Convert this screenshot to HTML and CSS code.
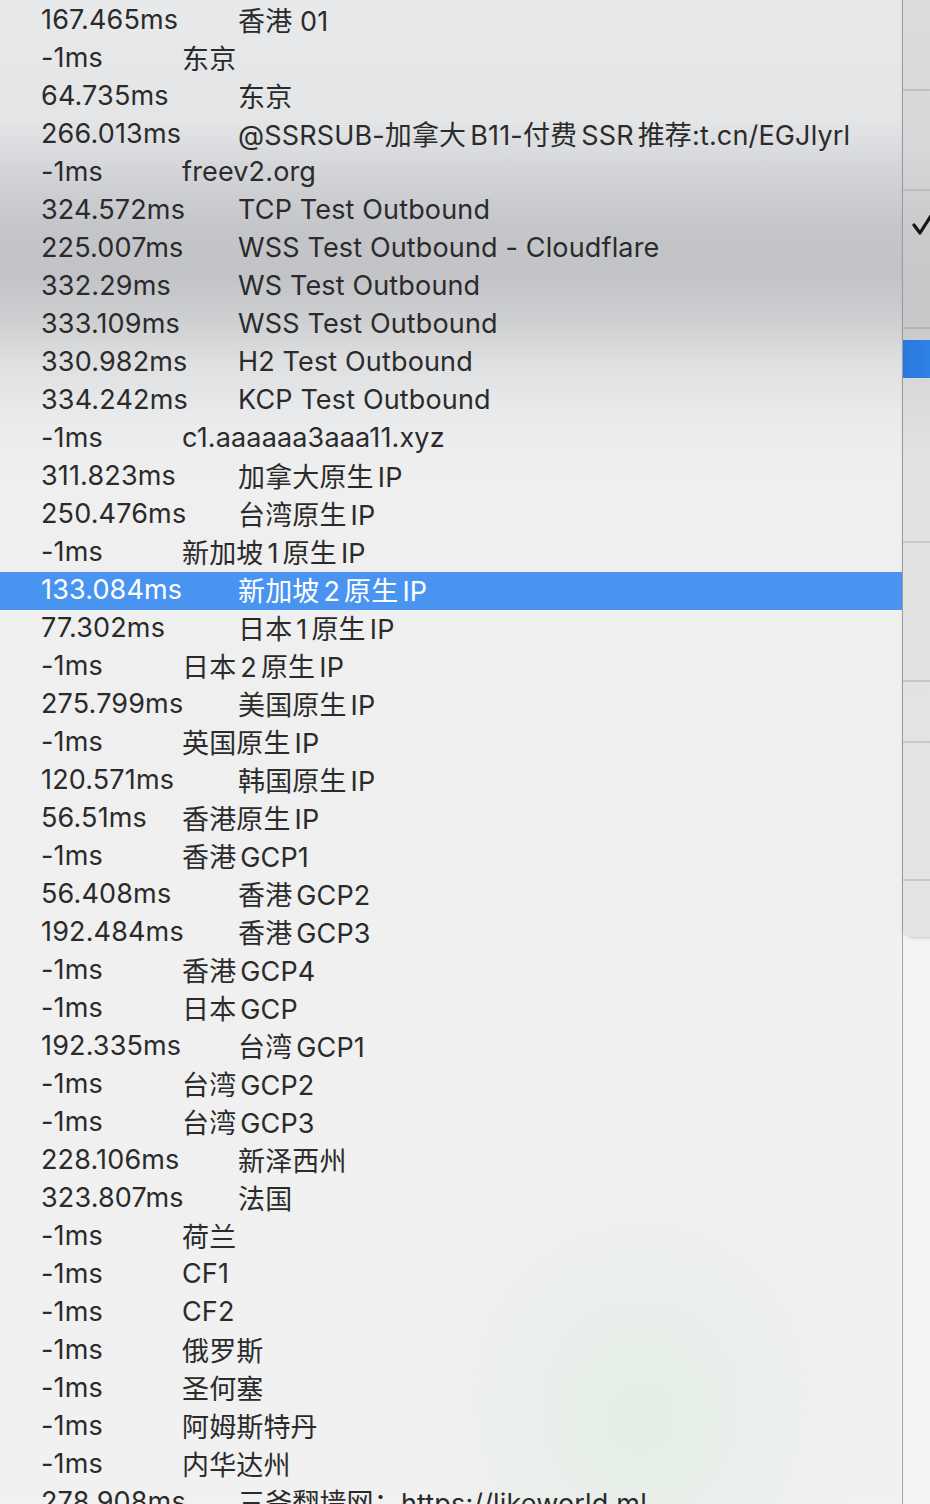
FILE: index.html
```html
<!DOCTYPE html>
<html lang="zh-CN">
<head>
<meta charset="utf-8">
<title>Latency menu</title>
<link rel="stylesheet" href="styles.css">
</head>
<body>
<div class="menu">
  <div class="row l"><span class="lat">167.465ms</span><span class="name">香港 01</span></div>
  <div class="row"><span class="lat">-1ms</span><span class="name">东京</span></div>
  <div class="row l"><span class="lat">64.735ms</span><span class="name">东京</span></div>
  <div class="row l"><span class="lat">266.013ms</span><span class="name">@SSRSUB-加拿大<span class="al">B11-</span>付费<span class="a">SSR</span>推荐:t.cn/EGJlyrl</span></div>
  <div class="row"><span class="lat">-1ms</span><span class="name">freev2.org</span></div>
  <div class="row l"><span class="lat">324.572ms</span><span class="name">TCP Test Outbound</span></div>
  <div class="row l"><span class="lat">225.007ms</span><span class="name">WSS Test Outbound - Cloudflare</span></div>
  <div class="row l"><span class="lat">332.29ms</span><span class="name">WS Test Outbound</span></div>
  <div class="row l"><span class="lat">333.109ms</span><span class="name">WSS Test Outbound</span></div>
  <div class="row l"><span class="lat">330.982ms</span><span class="name">H2 Test Outbound</span></div>
  <div class="row l"><span class="lat">334.242ms</span><span class="name">KCP Test Outbound</span></div>
  <div class="row"><span class="lat">-1ms</span><span class="name">c1.aaaaaa3aaa11.xyz</span></div>
  <div class="row l"><span class="lat">311.823ms</span><span class="name">加拿大原生<span class="a">IP</span></span></div>
  <div class="row l"><span class="lat">250.476ms</span><span class="name">台湾原生<span class="a">IP</span></span></div>
  <div class="row"><span class="lat">-1ms</span><span class="name">新加坡<span class="a">1</span>原生<span class="a">IP</span></span></div>
  <div class="row l sel"><span class="lat">133.084ms</span><span class="name">新加坡<span class="a">2</span>原生<span class="a">IP</span></span></div>
  <div class="row l"><span class="lat">77.302ms</span><span class="name">日本<span class="a">1</span>原生<span class="a">IP</span></span></div>
  <div class="row"><span class="lat">-1ms</span><span class="name">日本<span class="a">2</span>原生<span class="a">IP</span></span></div>
  <div class="row l"><span class="lat">275.799ms</span><span class="name">美国原生<span class="a">IP</span></span></div>
  <div class="row"><span class="lat">-1ms</span><span class="name">英国原生<span class="a">IP</span></span></div>
  <div class="row l"><span class="lat">120.571ms</span><span class="name">韩国原生<span class="a">IP</span></span></div>
  <div class="row"><span class="lat">56.51ms</span><span class="name">香港原生<span class="a">IP</span></span></div>
  <div class="row"><span class="lat">-1ms</span><span class="name">香港<span class="a">GCP1</span></span></div>
  <div class="row l"><span class="lat">56.408ms</span><span class="name">香港<span class="a">GCP2</span></span></div>
  <div class="row l"><span class="lat">192.484ms</span><span class="name">香港<span class="a">GCP3</span></span></div>
  <div class="row"><span class="lat">-1ms</span><span class="name">香港<span class="a">GCP4</span></span></div>
  <div class="row"><span class="lat">-1ms</span><span class="name">日本<span class="a">GCP</span></span></div>
  <div class="row l"><span class="lat">192.335ms</span><span class="name">台湾<span class="a">GCP1</span></span></div>
  <div class="row"><span class="lat">-1ms</span><span class="name">台湾<span class="a">GCP2</span></span></div>
  <div class="row"><span class="lat">-1ms</span><span class="name">台湾<span class="a">GCP3</span></span></div>
  <div class="row l"><span class="lat">228.106ms</span><span class="name">新泽西州</span></div>
  <div class="row l"><span class="lat">323.807ms</span><span class="name">法国</span></div>
  <div class="row"><span class="lat">-1ms</span><span class="name">荷兰</span></div>
  <div class="row"><span class="lat">-1ms</span><span class="name">CF1</span></div>
  <div class="row"><span class="lat">-1ms</span><span class="name">CF2</span></div>
  <div class="row"><span class="lat">-1ms</span><span class="name">俄罗斯</span></div>
  <div class="row"><span class="lat">-1ms</span><span class="name">圣何塞</span></div>
  <div class="row"><span class="lat">-1ms</span><span class="name">阿姆斯特丹</span></div>
  <div class="row"><span class="lat">-1ms</span><span class="name">内华达州</span></div>
  <div class="row l"><span class="lat">278.908ms</span><span class="name">三爷翻墙网：https://likeworld.ml</span></div>
</div>
<div class="behind">
  <div class="bmenu">
    <div class="seg h89"></div>
    <div class="sep"></div>
    <div class="seg h98"></div>
    <div class="sep"></div>
    <div class="seg h136 check-seg">
      <svg class="check" width="20" height="30" viewBox="0 0 20 30"><path d="M2 15 L8 23 L20 4" fill="none" stroke="#151515" stroke-width="3.2" stroke-linecap="round" stroke-linejoin="round"/></svg>
    </div>
    <div class="sep"></div>
    <div class="seg h11"></div>
    <div class="blue"></div>
    <div class="seg h163"></div>
    <div class="sep"></div>
    <div class="seg h137"></div>
    <div class="sep"></div>
    <div class="seg h59"></div>
    <div class="sep"></div>
    <div class="seg h136"></div>
    <div class="sep"></div>
    <div class="seg h56"></div>
  </div>
</div>
</body>
</html>
```

FILE: styles.css
```css
html, body {
  margin: 0;
  padding: 0;
}

body {
  width: 930px;
  height: 1504px;
  overflow: hidden;
  display: flex;
  background: #f3f3f3;
  font-family: Inter, "Noto Sans CJK SC", sans-serif;
  font-size: 27px;
  letter-spacing: 0.15px;
  color: #2b2b2b;
}

.menu {
  width: 903px;
  flex: none;
  box-sizing: border-box;
  padding-top: 2px;
  border-right: 1px solid #a6a6a6;
  background:
    radial-gradient(ellipse 220px 240px at 640px 1420px, rgba(216, 235, 220, 0.55), rgba(216, 235, 220, 0) 100%),
    linear-gradient(to bottom,
      #e8e9eb 0px,
      #e4e5e7 120px,
      #d3d5d8 170px,
      #c4c6c9 225px,
      #c1c3c6 275px,
      #cdcfd1 320px,
      #dfe0e1 365px,
      #eaebec 420px,
      #efefef 480px,
      #f1f1f1 1504px);
}

.row {
  display: flex;
  align-items: center;
  box-sizing: border-box;
  height: 38px;
  padding-left: 41px;
  padding-bottom: 3px;
  white-space: nowrap;
}

.lat {
  flex: none;
  width: 141px;
}

.row.l .lat {
  width: 197px;
}

.a {
  padding: 0 4px;
}

.al {
  padding-left: 4px;
}

.row.sel {
  background: #4a94f1;
  color: #ffffff;
}

.behind {
  flex: 1;
  display: flex;
  flex-direction: column;
}

.bmenu {
  display: flex;
  flex-direction: column;
  height: 937px;
  border-bottom-left-radius: 10px;
  box-shadow: 0 1px 3px rgba(0, 0, 0, 0.18);
  background: linear-gradient(to bottom,
    #dbdcde 0px,
    #d6d7d9 150px,
    #c9cacc 230px,
    #c6c7c9 320px,
    #d7d8da 380px,
    #e2e2e3 460px,
    #e4e4e4 937px);
}

.seg { flex: none; }
.h11 { height: 11px; }
.h56 { height: 56px; }
.h59 { height: 59px; }
.h89 { height: 89px; }
.h98 { height: 98px; }
.h136 { height: 136px; }
.h137 { height: 137px; }
.h163 { height: 163px; }

.sep {
  flex: none;
  height: 2px;
  background: rgba(150, 150, 152, 0.35);
}

.blue {
  flex: none;
  height: 38px;
  background: linear-gradient(to right, #2a78df, #2f82e6);
}

.check-seg {
  padding: 19px 0 0 9px;
  box-sizing: border-box;
}

.check {
  display: block;
}
```
